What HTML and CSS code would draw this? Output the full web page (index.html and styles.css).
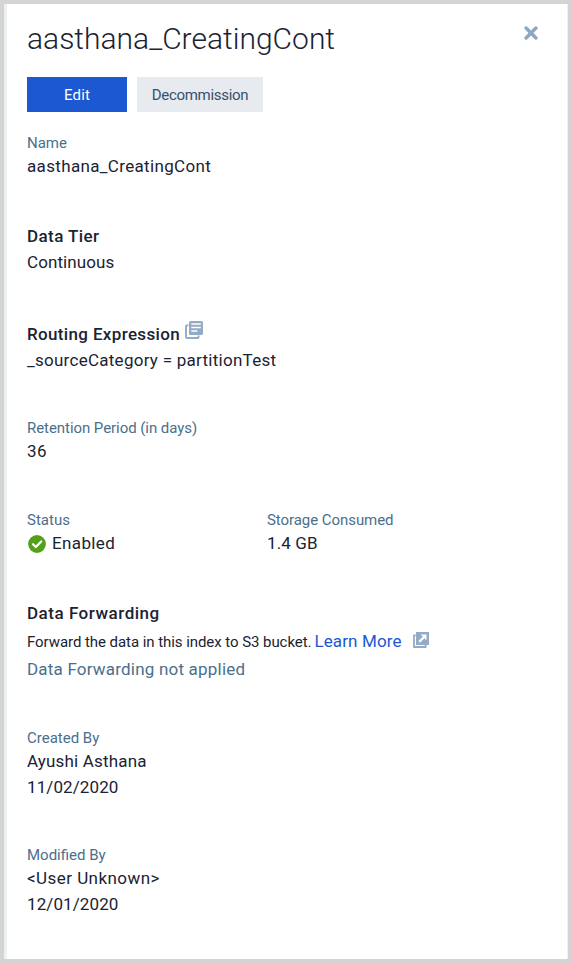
FILE: index.html
```
<!DOCTYPE html>
<html lang="en">
<head>
<meta charset="utf-8">
<title>aasthana_CreatingCont</title>
<link rel="stylesheet" href="styles.css">
</head>
<body>
<main class="panel">
  <header class="head">
    <h1 class="title">aasthana_CreatingCont</h1>
    <button class="close" aria-label="Close"><svg width="14" height="14" viewBox="0 0 14 14"><path d="M2.1 2.1l9.8 9.8M11.9 2.1l-9.8 9.8" stroke="currentColor" stroke-width="3.5" stroke-linecap="round"/></svg></button>
  </header>
  <div class="actions">
    <button class="btn primary">Edit</button>
    <button class="btn secondary">Decommission</button>
  </div>

  <section class="field">
    <div class="label">Name</div>
    <div class="value wide">aasthana_CreatingCont</div>
  </section>

  <section class="field tier">
    <h2 class="heading">Data Tier</h2>
    <div class="value">Continuous</div>
  </section>

  <section class="field">
    <h2 class="heading routing">Routing Expression<svg class="docs" width="18" height="18" viewBox="0 0 18 18"><path d="M3.5 4.4H1.8Q1 4.4 1 5.2V16Q1 17 2 17H12.7Q13.6 17 13.6 16V14.5" fill="none" stroke="currentColor" stroke-width="1.9"/><rect x="4" y="0" width="14" height="14" rx="1.6" fill="currentColor"/><path d="M6.3 3.1H15.8M6.3 6.5H15.8M6.3 9.9H12.3" stroke="#fff" stroke-width="1.5"/></svg></h2>
    <div class="value source">_sourceCategory = partitionTest</div>
  </section>

  <section class="field">
    <div class="label tight">Retention Period (in days)</div>
    <div class="value wide">36</div>
  </section>

  <section class="field status">
    <div>
      <div class="label">Status</div>
      <div class="value enabled"><svg width="18" height="18" viewBox="0 0 18 18"><circle cx="9" cy="9" r="8.9" fill="#55a01b"/><path d="M5 9.2l2.8 2.8 5.4-5.6" fill="none" stroke="#fff" stroke-width="2.2" stroke-linecap="round" stroke-linejoin="round"/></svg><span>Enabled</span></div>
    </div>
    <div>
      <div class="label tight">Storage Consumed</div>
      <div class="value">1.4 GB</div>
    </div>
  </section>

  <section class="field forwarding">
    <h2 class="heading">Data Forwarding</h2>
    <p class="hint"><span class="text">Forward the data in this index to S3 bucket.</span><a class="link">Learn More</a><svg width="16" height="16" viewBox="0 0 16 16"><path d="M2.8 3.4H1V15H12.6V13" fill="none" stroke="currentColor" stroke-width="1.8"/><path d="M3 0H16V13H3Z" fill="currentColor"/><path d="M6.2 9.9l4.8-4.8" stroke="#fff" stroke-width="2.2"/><path d="M7.7 2.5h5.8v5.8z" fill="#fff"/></svg></p>
    <div class="value none">Data Forwarding not applied</div>
  </section>

  <section class="field">
    <div class="label">Created By</div>
    <div class="value name">Ayushi Asthana</div>
    <div class="value">11/02/2020</div>
  </section>

  <section class="field">
    <div class="label">Modified By</div>
    <div class="value user">&lt;User Unknown&gt;</div>
    <div class="value date">12/01/2020</div>
  </section>
</main>
</body>
</html>
```
FILE: styles.css
```
* { box-sizing: border-box; }

body {
  margin: 0;
  height: 963px;
  padding: 4px;
  background: #d4d4d4;
  font-family: Roboto, "Liberation Sans", sans-serif;
  color: #1a2332;
}

.panel {
  height: 955px;
  padding: 0 29px 0 20px;
  background: #fff;
  border-left: 3px solid #ebf0f0;
  border-right: 1px solid #f1f1f1;
}

h1, h2, p { margin: 0; }

.head {
  display: flex;
  justify-content: space-between;
  height: 73px;
}

.title {
  padding-top: 17px;
  font-size: 30px;
  line-height: 36px;
  font-weight: 300;
}

.close {
  width: 14px;
  height: 14px;
  margin-top: 22px;
  padding: 0;
  border: 0;
  background: none;
  color: #8fa8c1;
}

.close svg { display: block; }

.actions {
  display: flex;
  gap: 10px;
  height: 35px;
  margin-bottom: 20px;
}

.btn {
  border: 0;
  padding: 2px 0 0;
  font: 400 15px/33px Roboto, "Liberation Sans", sans-serif;
}

.primary {
  width: 100px;
  background: #1b58d1;
  color: #fff;
  letter-spacing: .2px;
}

.secondary {
  width: 126px;
  background: #e7eaef;
  color: #36516b;
  letter-spacing: -.3px;
}

.field { margin-bottom: 44px; }
.tier { margin-bottom: 46px; }

.label {
  height: 21px;
  font-size: 15px;
  line-height: 23px;
  color: #4a6f8c;
}

.tight { letter-spacing: -.06px; }

.value {
  font-size: 17px;
  line-height: 26px;
  letter-spacing: .1px;
}

.heading {
  font-size: 17px;
  line-height: 26px;
  font-weight: 500;
  letter-spacing: .42px;
}

.wide { letter-spacing: .34px; }
.source { letter-spacing: .27px; }
.name { letter-spacing: .17px; }
.user { letter-spacing: .45px; }

.routing {
  display: flex;
  letter-spacing: .35px;
}

.docs {
  margin: 0 0 0 5px;
  color: #93abc4;
}

.status {
  display: grid;
  grid-template-columns: 240px 1fr;
  padding-top: 1px;
}

.enabled {
  display: flex;
  gap: 6px;
  letter-spacing: .36px;
}

.enabled svg { margin: 5px 0 0 1px; }

.forwarding { margin-bottom: 45px; }
.forwarding .heading { letter-spacing: .52px; }

.hint {
  display: flex;
  height: 30px;
  align-items: baseline;
  line-height: 30px;
  font-size: 15px;
}

.text { letter-spacing: -.06px; }

.link {
  margin-left: 3px;
  font-size: 17px;
  letter-spacing: .13px;
  color: #1b57d3;
}

.hint svg {
  align-self: flex-start;
  margin: 6px 0 0 11px;
  color: #93abc4;
}

.none {
  color: #4a6f8c;
  letter-spacing: .2px;
}
```
